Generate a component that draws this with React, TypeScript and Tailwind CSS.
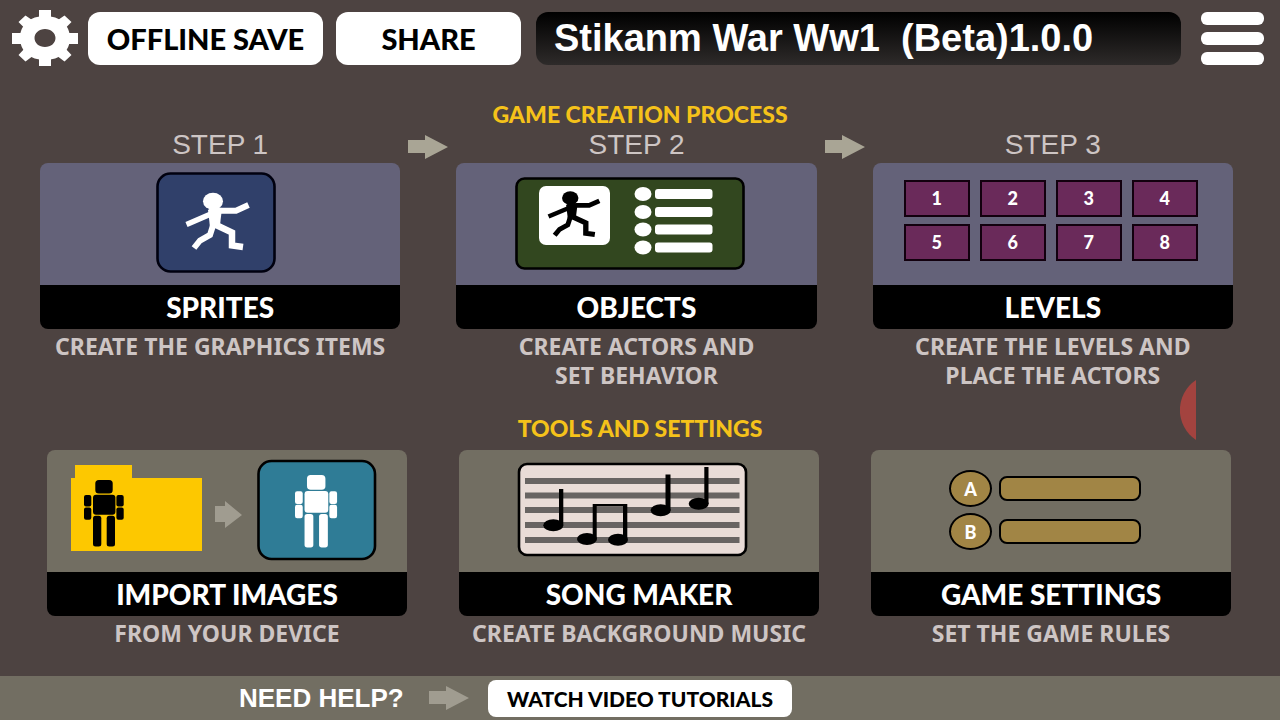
import type { ReactNode } from "react";

const DISPLAY = "font-['Lato',sans-serif] font-black";
const LABEL = "font-['Noto_Sans',sans-serif] font-bold";

function GearIcon() {
  return (
    <svg viewBox="0 0 66 56" className="h-14 w-[66px]" fill="white" aria-hidden="true">
      <path
        fillRule="evenodd"
        d="M33 6c-15 0-25 9-25 22s10 22 25 22 25-9 25-22S48 6 33 6Zm0 13c6 0 10.500 4 10.500 9s-4.500 9-10.500 9-10.500-4-10.500-9 4.500-9 10.500-9Z"
      />
      <path d="M27 0h12v9H27ZM27 47h12v9H27ZM0 23h11v11H0ZM55 23h11v11H55Z" />
      <path d="M6.500 12l7-6.500 8 5.500-8 8ZM59.500 12l-7-6.500-8 5.500 8 8ZM6.500 45l7 6.500 8-6-8-8ZM59.500 45l-7 6.500-8-6 8-8Z" />
    </svg>
  );
}

function Arrow({ className }: { className: string }) {
  return (
    <svg viewBox="0 0 40 24" className={className} fill="currentColor" aria-hidden="true">
      <path d="M0 5h17V0l23 12-23 12v-6H0Z" />
    </svg>
  );
}

function Runner() {
  return (
    <g fill="none" stroke="currentColor">
      <ellipse cx="57" cy="29.300" rx="10" ry="8.500" fill="currentColor" stroke="none" />
      <path d="M52 38l4-3 10 1-2 17-3 3-7-1Z" fill="currentColor" stroke="none" />
      <path d="M64 38.700H80L92.500 33" strokeWidth="6" />
      <path d="M56 41.500L30.500 52.500" strokeWidth="5.500" />
      <path d="M58 52L76 60.500V73.500L87 75" strokeWidth="6.500" />
      <path d="M57.500 52L54 63 44 68.500 38 76" strokeWidth="6" />
    </g>
  );
}

function Robot() {
  return (
    <g fill="currentColor">
      <rect x="11.300" y="0" width="17.400" height="13.500" rx="3.500" />
      <rect x="9" y="14.700" width="22.400" height="20" rx="3" />
      <rect x="0" y="15" width="7.300" height="11.500" rx="2" />
      <rect x="0" y="27.400" width="7.300" height="12.300" rx="2" />
      <rect x="32.400" y="15" width="7.300" height="11.500" rx="2" />
      <rect x="32.400" y="27.400" width="7.300" height="12.300" rx="2" />
      <rect x="9" y="35.700" width="8.300" height="30.700" rx="2.500" />
      <rect x="22.700" y="35.700" width="8.300" height="30.700" rx="2.500" />
    </g>
  );
}

function SpritesArt() {
  return (
    <svg viewBox="0 0 360 122" className="h-[122px] w-[360px]" aria-hidden="true">
      <rect x="117.500" y="10.500" width="117" height="98" rx="13" fill="#30406a" stroke="#00000f" strokeWidth="2.600" />
      <g transform="translate(116 9)" className="text-white">
        <Runner />
      </g>
    </svg>
  );
}

function ObjectsArt() {
  return (
    <svg viewBox="0 0 360 122" className="h-[122px] w-[360px]" aria-hidden="true">
      <rect x="60.500" y="15.500" width="227" height="90" rx="8" fill="#32471f" stroke="black" strokeWidth="2.600" />
      <rect x="83" y="23" width="71" height="59" rx="7" fill="white" />
      <g transform="translate(67.500 11.500) scale(.82 .8)" className="text-black">
        <Runner />
      </g>
      {[31, 49, 66.5, 84.5].map((y) => (
        <g key={y} fill="white">
          <ellipse cx="187" cy={y} rx="8.500" ry="7" />
          <rect x="199" y={y - 5} width="57.500" height="10" rx="3" />
        </g>
      ))}
    </svg>
  );
}

function LevelsArt() {
  return (
    <div className="grid grid-cols-4 gap-x-[10px] gap-y-[7px] pr-1 pb-2">
      {[1, 2, 3, 4, 5, 6, 7, 8].map((n) => (
        <span
          key={n}
          className="flex h-[37px] w-[66px] items-center justify-center border-2 border-[#12000e] bg-[#6a2a5a] text-lg leading-none font-black text-white"
        >
          {n}
        </span>
      ))}
    </div>
  );
}

function ImportArt() {
  return (
    <svg viewBox="0 0 360 122" className="h-[122px] w-[360px]" aria-hidden="true">
      <path d="M28 15h57v13h70v73H24V28h4Z" fill="#fdc800" />
      <g transform="translate(37 30)" className="text-black">
        <Robot />
      </g>
      <path d="M168 56h10v-5l17 14-17 13v-6h-10Z" fill="#a09c90" />
      <rect x="211.500" y="11" width="116.500" height="98" rx="13" fill="#2f7c96" stroke="black" strokeWidth="2.600" />
      <g transform="translate(248 25) scale(1.060 1.090)" className="text-white">
        <Robot />
      </g>
    </svg>
  );
}

function SongArt() {
  return (
    <svg viewBox="0 0 360 122" className="h-[122px] w-[360px]" aria-hidden="true">
      <rect x="60" y="14" width="227" height="91" rx="8" fill="#e9dcd7" stroke="black" strokeWidth="2.600" />
      {[28, 42.5, 57, 72, 87].map((y) => (
        <rect key={y} x="66" y={y} width="214.500" height="6" fill="#686462" />
      ))}
      <g fill="black" transform="translate(-2 0)">
        <ellipse cx="96.300" cy="75.300" rx="10" ry="6" />
        <path d="M102 39h4.300v36H102Z" />
        <ellipse cx="130" cy="89" rx="10" ry="6" />
        <ellipse cx="161" cy="89.700" rx="10" ry="6" />
        <path d="M135.700 54h34.600v35H166V56.500h-26.300V89h-4Z" />
        <ellipse cx="203.700" cy="60.300" rx="10" ry="6" />
        <path d="M208.500 24.500h5V60h-5Z" />
        <ellipse cx="241.700" cy="53.700" rx="10" ry="6" />
        <path d="M247.300 17h4.200v37h-4.200Z" />
      </g>
    </svg>
  );
}

function SettingsArt() {
  return (
    <div className="flex flex-col gap-[6px] pr-3 pb-[2px]">
      {["A", "B"].map((key) => (
        <div key={key} className="flex items-center gap-[7px]">
          <span className="flex h-[37px] w-[43px] items-center justify-center rounded-[50%] border-2 border-black bg-[#a18545] text-lg leading-none font-black text-white">
            {key}
          </span>
          <span className="h-[25px] w-[142px] rounded-lg border-2 border-black bg-[#a18545]" />
        </div>
      ))}
    </div>
  );
}

type CardProps = { title: string; caption: ReactNode; art: ReactNode; tone: "violet" | "olive" };

function Card({ title, caption, art, tone }: CardProps) {
  return (
    <div className="flex flex-col items-center">
      <button type="button" className={`${DISPLAY} flex w-full flex-col overflow-hidden rounded-lg`}>
        <span
          className={`flex h-[122px] w-full items-center justify-center ${tone === "violet" ? "bg-[#646279]" : "bg-[#726e62]"}`}
        >
          {art}
        </span>
        <span className="flex h-11 w-full items-center justify-center bg-black text-[28px] leading-none text-white">
          {title}
        </span>
      </button>
      <p className={`${LABEL} pt-[3px] text-center text-[23px] leading-[29px] whitespace-nowrap text-[#cdc5c4]`}>{caption}</p>
    </div>
  );
}

function SectionTitle({ children }: { children: ReactNode }) {
  return <h2 className={`${DISPLAY} text-center text-[23px] leading-7 text-[#f5c21a]`}>{children}</h2>;
}

function Step({ n }: { n: number }) {
  return (
    <span className="text-center font-['Liberation_Sans',sans-serif] text-[28px] leading-8 text-[#cdc5c4]">STEP {n}</span>
  );
}

export default function App() {
  return (
    <div className="relative flex min-h-screen flex-col bg-[#4d4341]">
      <header className="flex items-center pt-[10px] pr-4 pl-3">
        <button type="button" aria-label="Settings">
          <GearIcon />
        </button>
        <button
          type="button"
          className={`${DISPLAY} ml-[10px] h-[53px] w-[235px] rounded-xl bg-white text-[29px] leading-none whitespace-nowrap text-black`}
        >
          OFFLINE SAVE
        </button>
        <button
          type="button"
          className={`${DISPLAY} ml-[13px] h-[53px] w-[185px] rounded-xl bg-white text-[29px] leading-none text-black`}
        >
          SHARE
        </button>
        <h1 className="ml-[15px] flex h-[53px] flex-1 items-center rounded-xl bg-linear-to-b/srgb from-black to-[#2e2b2a] pl-[18px] font-['Liberation_Sans',sans-serif] text-[38px] leading-none font-bold whitespace-pre text-white">
          {"Stikanm War Ww1  (Beta)1.0.0"}
        </h1>
        <button type="button" aria-label="Menu" className="ml-5 flex w-[63px] flex-col gap-[7px]">
          <span className="h-[13px] w-full rounded-md bg-white" />
          <span className="h-[13px] w-full rounded-md bg-white" />
          <span className="h-[13px] w-full rounded-md bg-white" />
        </button>
      </header>

      <main>
        <section className="pt-[34px]">
          <SectionTitle>GAME CREATION PROCESS</SectionTitle>
          <div className="grid grid-cols-[1fr_56px_1fr_56px_1fr] items-center pt-px pr-[47px] pl-10">
            <Step n={1} />
            <Arrow className="mx-auto mt-1 h-6 w-10 text-[#a9a595]" />
            <Step n={2} />
            <Arrow className="mx-auto mt-1 h-6 w-10 text-[#a9a595]" />
            <Step n={3} />
          </div>
          <div className="grid grid-cols-3 gap-14 pt-[2px] pr-[47px] pl-10">
            <Card tone="violet" title="SPRITES" caption="CREATE THE GRAPHICS ITEMS" art={<SpritesArt />} />
            <Card
              tone="violet"
              title="OBJECTS"
              caption={
                <>
                  CREATE ACTORS AND
                  <br />
                  SET BEHAVIOR
                </>
              }
              art={<ObjectsArt />}
            />
            <Card
              tone="violet"
              title="LEVELS"
              caption={
                <>
                  CREATE THE LEVELS AND
                  <br />
                  PLACE THE ACTORS
                </>
              }
              art={<LevelsArt />}
            />
          </div>
        </section>

        <section className="pt-6">
          <SectionTitle>TOOLS AND SETTINGS</SectionTitle>
          <div className="grid grid-cols-3 gap-[52px] pt-2 pr-[49px] pl-[47px]">
            <Card tone="olive" title="IMPORT IMAGES" caption="FROM YOUR DEVICE" art={<ImportArt />} />
            <Card tone="olive" title="SONG MAKER" caption="CREATE BACKGROUND MUSIC" art={<SongArt />} />
            <Card tone="olive" title="GAME SETTINGS" caption="SET THE GAME RULES" art={<SettingsArt />} />
          </div>
        </section>
      </main>

      <footer className="mt-auto flex h-11 items-center bg-[#726e62] pl-[239px]">
        <span className="w-[169px] font-['Liberation_Sans',sans-serif] text-[26px] leading-none font-bold whitespace-nowrap text-white">
          NEED HELP?
        </span>
        <Arrow className="ml-[21px] h-6 w-10 text-[#a09c90]" />
        <a
          href="#tutorials"
          className={`${DISPLAY} ml-[19px] flex h-[37px] w-[304px] items-center justify-center rounded-lg bg-white text-[21px] leading-none whitespace-nowrap text-black`}
        >
          WATCH VIDEO TUTORIALS
        </a>
      </footer>

      <svg viewBox="0 0 16 60" className="absolute top-[380px] right-[84px] h-[60px] w-4" fill="#a3433f" aria-hidden="true">
        <path d="M16 0A36 36 0 0 0 16 60Z" />
      </svg>
    </div>
  );
}
